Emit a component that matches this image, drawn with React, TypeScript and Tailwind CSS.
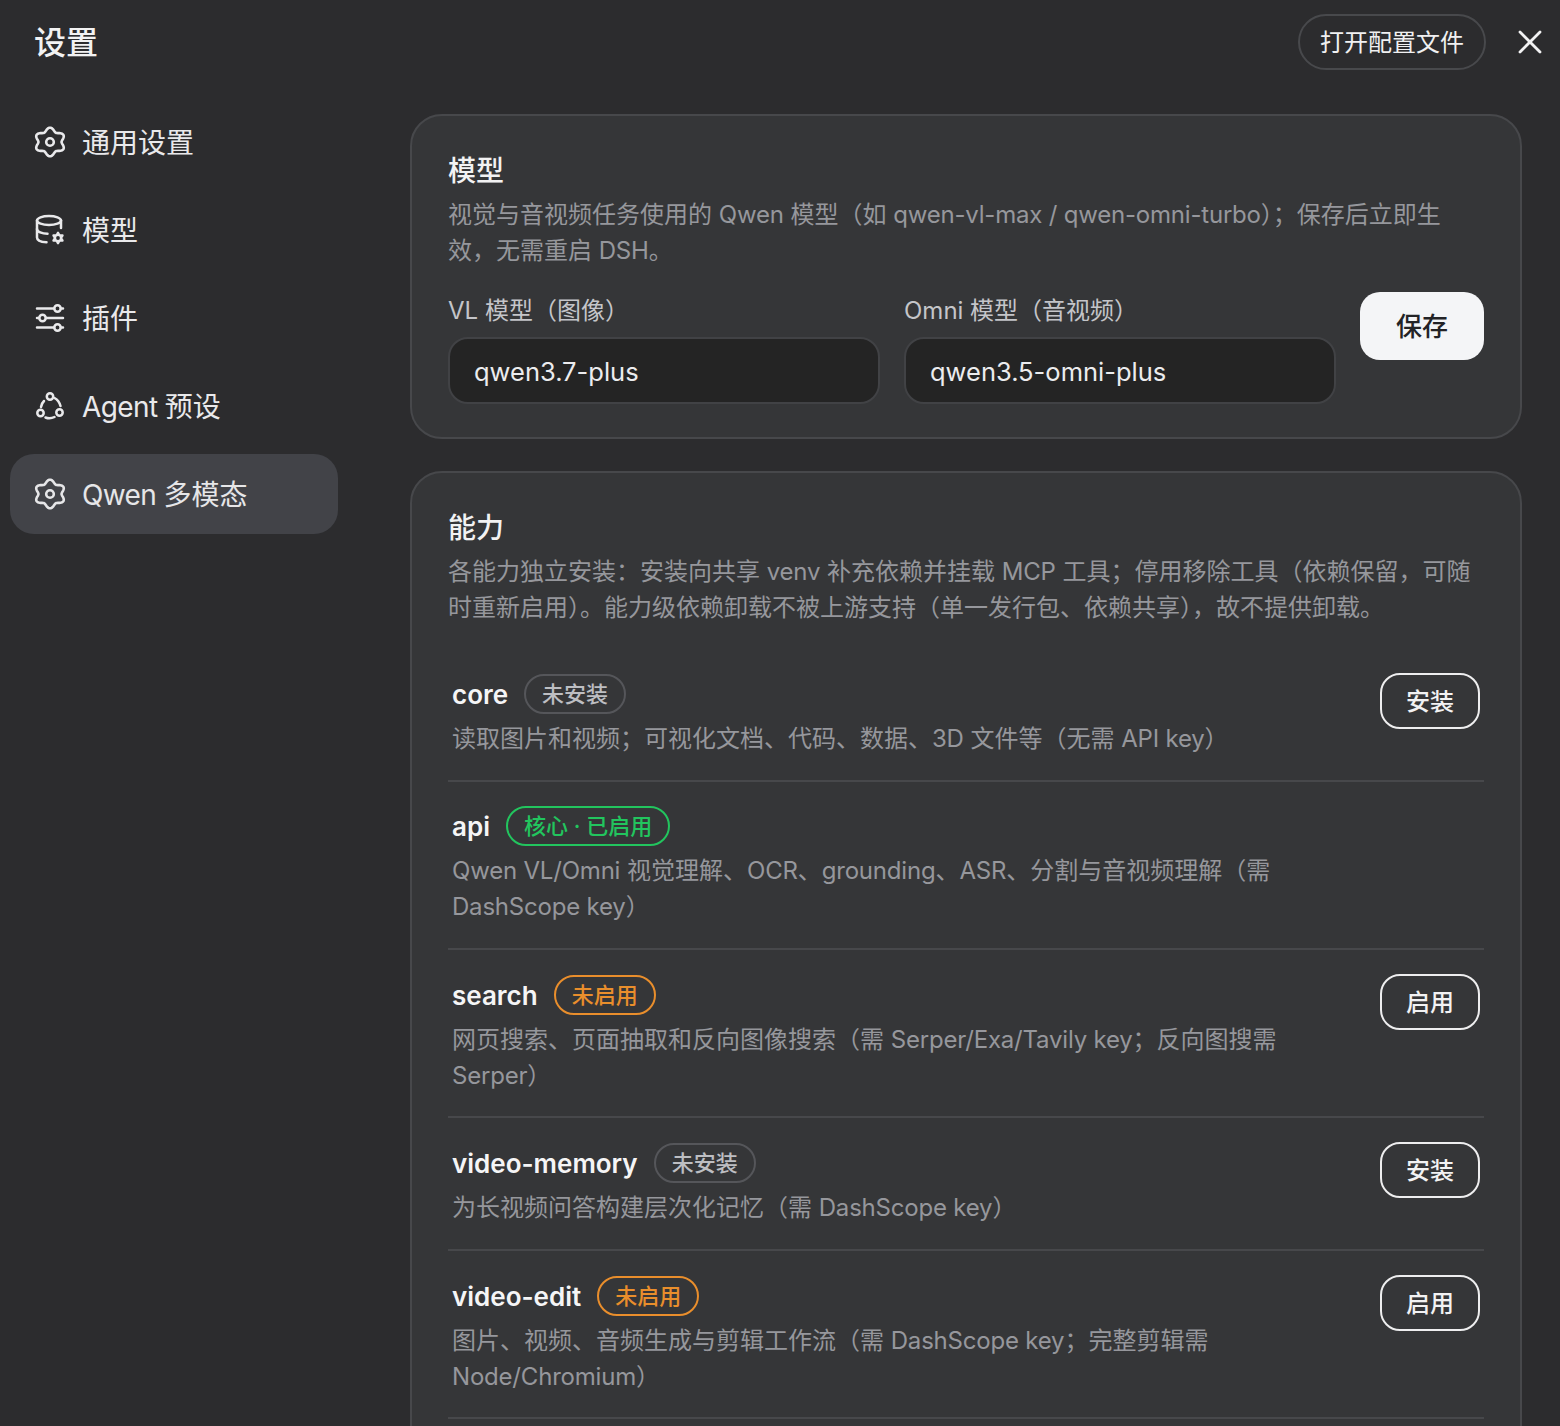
import { type ReactNode } from 'react'

const font = "font-['Inter','Noto_Sans_CJK_SC',sans-serif]"

// full-width punctuation used in the copy
const LP = '\uFF08'
const RP = '\uFF09'
const SEMI = '\uFF1B'
const COMMA = '\uFF0C'
const COLON = '\uFF1A'

// six rounded lobes, one pointing straight up
const gearPath = Array.from({ length: 120 }, (_, i) => {
  const t = (i / 120) * Math.PI * 2
  const r = 12.5 + 1.8 * Math.cos(6 * t)
  const x = 16 + 1.08 * r * Math.sin(t)
  const y = 16 - r * Math.cos(t)
  return `${i === 0 ? 'M' : 'L'}${x.toFixed(2)} ${y.toFixed(2)}`
}).join('') + 'Z'

const smallGearPath = Array.from({ length: 90 }, (_, i) => {
  const t = (i / 90) * Math.PI * 2
  const r = 5.4 + 1 * Math.cos(6 * t)
  const x = 24 + r * Math.sin(t)
  const y = 24 - r * Math.cos(t)
  return `${i === 0 ? 'M' : 'L'}${x.toFixed(2)} ${y.toFixed(2)}`
}).join('') + 'Z'

const GearIcon = () => (
  <svg width="32" height="32" viewBox="0 0 32 32" fill="none" stroke="currentColor" strokeWidth="2.600" strokeLinejoin="round">
    <path d={gearPath} />
    <circle cx="16" cy="16" r="3.800" />
  </svg>
)

const DatabaseIcon = () => (
  <svg width="32" height="32" viewBox="0 0 32 32" fill="none" stroke="currentColor" strokeWidth="2.500" strokeLinecap="round" strokeLinejoin="round">
    <ellipse cx="15" cy="6.500" rx="12" ry="4.500" />
    <path d="M3 6.500V23.500c0 2.800 4.500 4.500 9.500 4.800" />
    <path d="M27 6.500V14" />
    <path d="M3 15c0 2.800 5 4.800 10.500 4.800" />
    <path d={smallGearPath} fill="currentColor" stroke="none" />
    <circle cx="24" cy="24" r="1.900" fill="#2c2c2e" stroke="none" />
  </svg>
)

const SlidersIcon = () => (
  <svg width="32" height="32" viewBox="0 0 32 32" fill="none" stroke="currentColor" strokeWidth="2.500" strokeLinecap="round">
    <path d="M3 6.500h17M27 6.500h2M3 16h2M12 16h17M3 25.500h17M27 25.500h2" />
    <circle cx="23.500" cy="6.500" r="3.200" />
    <circle cx="8.500" cy="16" r="3.200" />
    <circle cx="23.500" cy="25.500" r="3.200" />
  </svg>
)

const AgentIcon = () => (
  <svg width="32" height="32" viewBox="0 0 32 32" fill="none" stroke="currentColor" strokeWidth="2.500" strokeLinecap="round">
    <circle cx="16" cy="6.500" r="3.200" />
    <circle cx="6.500" cy="23" r="3.200" />
    <circle cx="25.500" cy="22.500" r="3.200" />
    <path d="M10 11c-1.500 1.500-2.700 3.500-3 6" />
    <path d="M20.500 8c2.800 1.500 5 4 6 8" />
    <path d="M11.500 27.500c2.500 1 6 1 9-.5" />
  </svg>
)

// latin runs sit a bit tighter than the CJK around them
function Mixed({ text }: { text: string }) {
  return (
    <>
      {text.split(/([A-Za-z0-9][A-Za-z0-9 ./-]*[A-Za-z0-9])/).map((part, i) =>
        i % 2 === 1 ? <span key={i} className="tracking-[-0.2px]">{part}</span> : part,
      )}
    </>
  )
}

const navItems: { latin?: string; label: string; icon: ReactNode; active?: boolean }[] = [
  { label: '通用设置', icon: <GearIcon /> },
  { label: '模型', icon: <DatabaseIcon /> },
  { label: '插件', icon: <SlidersIcon /> },
  { latin: 'Agent', label: '预设', icon: <AgentIcon /> },
  { latin: 'Qwen', label: '多模态', icon: <GearIcon />, active: true },
]

type Tone = 'gray' | 'green' | 'orange'

const badgeTone: Record<Tone, string> = {
  gray: 'border-[#55565a] text-[#bdbec2]',
  green: 'border-[#22c55e] text-[#22c55e]',
  orange: 'border-[#e98e2c] text-[#e98e2c]',
}

const capabilities: { name: string; badge: string; tone: Tone; action?: string; desc: string; cls: string }[] = [
  {
    name: 'core',
    badge: '未安装',
    tone: 'gray',
    action: '安装',
    desc: `读取图片和视频${SEMI}可视化文档、代码、数据、3D 文件等${LP}无需 API key${RP}`,
    cls: 'h-[133px] pt-[24px]',
  },
  {
    name: 'api',
    badge: '核心 · 已启用',
    tone: 'green',
    desc: `Qwen VL/Omni 视觉理解、OCR、grounding、ASR、分割与音视频理解${LP}需 DashScope key${RP}`,
    cls: 'h-[168px] pt-[23px]',
  },
  {
    name: 'search',
    badge: '未启用',
    tone: 'orange',
    action: '启用',
    desc: `网页搜索、页面抽取和反向图像搜索${LP}需 Serper/Exa/Tavily key${SEMI}反向图搜需 Serper${RP}`,
    cls: 'h-[168px] pt-[24px]',
  },
  {
    name: 'video-memory',
    badge: '未安装',
    tone: 'gray',
    action: '安装',
    desc: `为长视频问答构建层次化记忆${LP}需 DashScope key${RP}`,
    cls: 'h-[133px] pt-[24px]',
  },
  {
    name: 'video-edit',
    badge: '未启用',
    tone: 'orange',
    action: '启用',
    desc: `图片、视频、音频生成与剪辑工作流${LP}需 DashScope key${SEMI}完整剪辑需 Node/Chromium${RP}`,
    cls: 'h-[168px] pt-[24px]',
  },
]

function ModelField({ label, value }: { label: string; value: string }) {
  return (
    <div className="w-[432px] shrink-0">
      <div className="pt-px text-[24px] leading-[36px] text-[#c4c5c9]">{label}</div>
      <div className="mt-[8px] flex h-[67px] items-center rounded-[20px] border-2 border-[#414245] bg-[#242424] px-[24px] pt-[3px] text-[25.5px] text-[#ececee]">
        {value}
      </div>
    </div>
  )
}

export default function App() {
  return (
    <div className={`${font} h-[1426px] w-[1560px] overflow-hidden bg-[#2c2c2e] text-[#f2f2f3]`}>
      <header className="flex h-[84px] items-center justify-between pl-[34px] pr-[16px]">
        <h1 className="pt-[2px] text-[32px] font-medium">设置</h1>
        <div className="flex items-center gap-[30px]">
          <button className="h-[56px] w-[188px] rounded-full border-2 border-[#48494c] pt-[2px] text-[24px] text-[#f0f0f1]">打开配置文件</button>
          <svg width="28" height="28" viewBox="0 0 28 28" stroke="currentColor" strokeWidth="2.800" strokeLinecap="round">
            <path d="M4 4l20 20M24 4L4 24" />
          </svg>
        </div>
      </header>

      <div className="flex">
        <nav className="ml-[10px] mt-[18px] flex w-[328px] shrink-0 flex-col gap-[8px]">
          {navItems.map((item) => (
            <div
              key={item.label}
              className={`flex h-[80px] items-center gap-[16px] rounded-[24px] pl-[24px] text-[28px] ${item.active ? 'bg-[#424348] text-[#e6e6e8]' : 'text-[#e9e9eb]'}`}
            >
              <span className="shrink-0">{item.icon}</span>
              <span className="pt-[2px]">
                {item.latin && <span className="tracking-[-0.6px]">{item.latin} </span>}
                {item.label}
              </span>
            </div>
          ))}
        </nav>

        <main className="ml-[72px] mt-[30px] flex w-[1112px] shrink-0 flex-col gap-[32px]">
          <section className="h-[325px] rounded-[32px] border-2 border-[#47484b] bg-[#353638] px-[36px] pt-[35px]">
            <h2 className="text-[28px] font-medium leading-[40px]">模型</h2>
            <p className="mt-[6px] text-[24px] leading-[36px] text-[#96979c]">
              <Mixed text={`视觉与音视频任务使用的 Qwen 模型${LP}如 qwen-vl-max / qwen-omni-turbo${RP}${SEMI}保存后立即生效${COMMA}无需重启 DSH。`} />
            </p>
            <div className="mt-[23px] flex gap-[24px]">
              <ModelField label={`VL 模型${LP}图像${RP}`} value="qwen3.7-plus" />
              <ModelField label={`Omni 模型${LP}音视频${RP}`} value="qwen3.5-omni-plus" />
              <button className="h-[68px] w-[124px] shrink-0 self-start rounded-[20px] bg-[#f4f5f7] pt-px text-[26px] font-medium text-[#232326]">保存</button>
            </div>
          </section>

          <section className="h-[1000px] rounded-[32px] border-2 border-[#47484b] bg-[#353638] px-[36px] pt-[35px]">
            <h2 className="text-[28px] font-medium leading-[40px]">能力</h2>
            <p className="mt-[6px] text-[24px] leading-[36px] text-[#96979c]">
              <Mixed text={`各能力独立安装${COLON}安装向共享 venv 补充依赖并挂载 MCP 工具${SEMI}停用移除工具${LP}依赖保留${COMMA}可随时重新启用${RP}。能力级依赖卸载不被上游支持${LP}单一发行包、依赖共享${RP}${COMMA}故不提供卸载。`} />
            </p>
            <div className="mt-[23px]">
              {capabilities.map((cap) => (
                <div key={cap.name} className={`flex items-start justify-between border-b-2 border-[#47484b] px-[4px] ${cap.cls}`}>
                  <div className="w-[830px]">
                    <div className="-mt-px flex h-[44px] items-center gap-[16px]">
                      <span className="text-[26px] font-semibold text-[#f5f5f6]">{cap.name}</span>
                      <span className={`flex h-[40px] items-center rounded-full border-2 px-[16px] text-[22px] font-medium ${badgeTone[cap.tone]}`}>{cap.badge}</span>
                    </div>
                    <p className="mt-[5px] text-[24px] leading-[36px] text-[#96979c]"><Mixed text={cap.desc} /></p>
                  </div>
                  {cap.action && (
                    <button className="h-[56px] w-[100px] shrink-0 rounded-[20px] border-2 border-[#eeeeef] pt-px text-[24px] font-medium text-[#f2f2f3]">{cap.action}</button>
                  )}
                </div>
              ))}
            </div>
          </section>
        </main>
      </div>
    </div>
  )
}
